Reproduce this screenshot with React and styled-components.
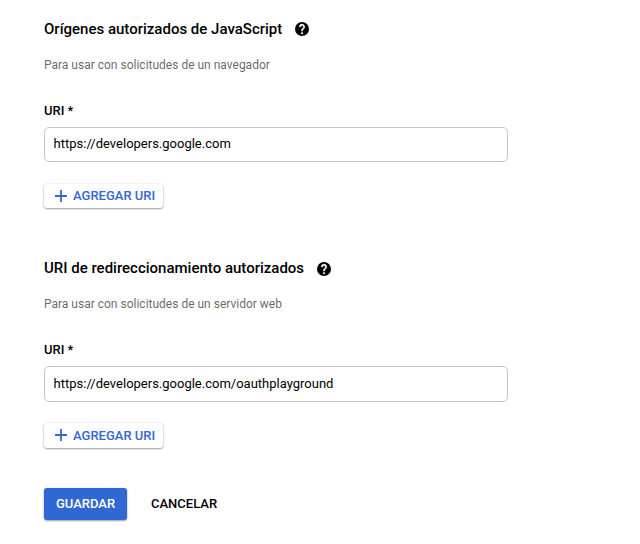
import React from "react";
import styled, { createGlobalStyle } from "styled-components";

const GlobalStyle = createGlobalStyle`
  *, *::before, *::after { box-sizing: border-box; }
  body { margin: 0; background: #fff; color: #000; font-family: Roboto, sans-serif; }
`;

const Form = styled.form`
  height: 544px;
  padding: 18px 44px 0;
`;

const Section = styled.section`
  height: ${(p) => p.$height}px;
`;

const Heading = styled.div`
  display: flex;
  align-items: flex-start;
  height: 22px;
  gap: 12.5px;
`;

const Title = styled.h2`
  margin: 0;
  font-size: 15px;
  line-height: 22px;
  font-weight: 500;
  white-space: nowrap;
`;

const HelpIcon = styled.svg`
  width: 14px;
  height: 14px;
  margin-top: ${(p) => p.$top}px;
`;

const Hint = styled.p`
  margin: 17px 0 0;
  font-size: 12px;
  line-height: 16px;
  color: rgba(0, 0, 0, 0.62);
`;

const Label = styled.label`
  display: block;
  margin-top: 30px;
  font-size: 13px;
  line-height: 16px;
  font-weight: 500;
`;

const Input = styled.input`
  display: block;
  width: 464px;
  height: ${(p) => p.$height}px;
  margin: 8px 0 0;
  padding: 0 8.6px 2px;
  border: 1px solid #c6c6c6;
  border-radius: 5px;
  background: #fff;
  color: #000;
  font: 400 13px Roboto, sans-serif;
  outline: none;
`;

const Button = styled.button`
  display: inline-flex;
  align-items: center;
  justify-content: center;
  padding: 0;
  border: 0;
  border-radius: 3px;
  background: transparent;
  color: #000;
  font: 500 13px/16px Roboto, sans-serif;
  white-space: nowrap;
`;

const AddButton = styled(Button)`
  display: flex;
  justify-content: flex-start;
  width: 119px;
  height: ${(p) => p.$height}px;
  margin-top: ${(p) => p.$top}px;
  padding-left: 11px;
  gap: 6px;
  color: #3367d6;
  background: #fff;
  box-shadow: 0 1px 2px rgba(0, 0, 0, 0.38), 0 0 2px rgba(0, 0, 0, 0.12);
`;

const PlusIcon = styled.svg`
  align-self: flex-start;
  margin-top: 6px;
  width: 12px;
  height: 12px;
  fill: none;
  stroke: currentColor;
  stroke-width: 1.8;
`;

const Actions = styled.div`
  display: flex;
  gap: 24px;
`;

const SaveButton = styled(Button)`
  width: 83px;
  height: 32px;
  color: #fff;
  background: #3067d3;
  box-shadow: 0 1px 2px rgba(0, 0, 0, 0.35), 0 0 2px rgba(0, 0, 0, 0.12);
`;

function UriSection({ title, hint, value, height, inputHeight, addHeight, addTop, helpTop }) {
  return (
    <Section $height={height}>
      <Heading>
        <Title>{title}</Title>
        <HelpIcon viewBox="2 2 20 20" $top={helpTop}>
          <circle cx="12" cy="12" r="10" />
          <path
            fill="#fff"
            stroke="#fff"
            strokeWidth="0.6"
            d="M13 19h-2v-2h2zM15.07 11.25l-.9.92C13.45 12.9 13 13.5 13 15h-2v-.5c0-1.1.45-2.1 1.17-2.83l1.24-1.26c.37-.36.59-.86.59-1.41 0-1.1-.9-2-2-2s-2 .9-2 2H8c0-2.21 1.79-4 4-4s4 1.79 4 4c0 .88-.36 1.68-.93 2.25z"
          />
        </HelpIcon>
      </Heading>
      <Hint>{hint}</Hint>
      <Label>URI *</Label>
      <Input $height={inputHeight} defaultValue={value} spellCheck={false} />
      <AddButton type="button" $height={addHeight} $top={addTop}>
        <PlusIcon viewBox="0 0 12 12">
          <path d="M6 0v12M0 6h12" />
        </PlusIcon>
        AGREGAR URI
      </AddButton>
    </Section>
  );
}

export default function App() {
  return (
    <>
      <GlobalStyle />
      <Form>
        <UriSection
          title="Orígenes autorizados de JavaScript"
          hint="Para usar con solicitudes de un navegador"
          value="https://developers.google.com"
          height={239}
          inputHeight={35}
          addHeight={24}
          addTop={22}
          helpTop={4}
        />
        <UriSection
          title="URI de redireccionamiento autorizados"
          hint="Para usar con solicitudes de un servidor web"
          value="https://developers.google.com/oauthplayground"
          height={231}
          inputHeight={36}
          addHeight={25}
          addTop={21}
          helpTop={5}
        />
        <Actions>
          <SaveButton type="button">GUARDAR</SaveButton>
          <Button type="button">CANCELAR</Button>
        </Actions>
      </Form>
    </>
  );
}
